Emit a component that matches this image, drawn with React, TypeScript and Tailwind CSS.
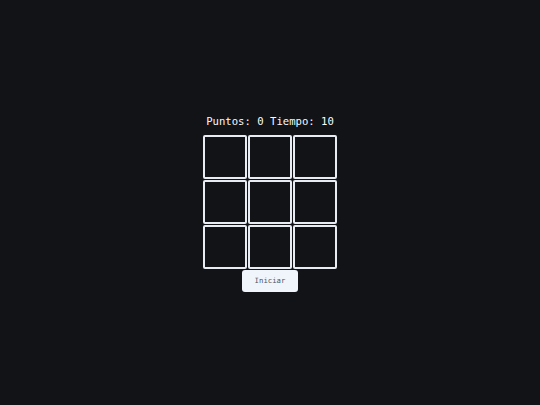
import React, { useState } from 'react';

const App: React.FC = () => {
  const [score] = useState(0);
  const [time] = useState(10);
  const cells = Array.from({ length: 9 });

  return (
    <div
      className="min-h-screen w-full bg-[#111317] flex flex-col items-center justify-center text-[#f8fafc]"
      style={{ fontFamily: '"DejaVu Sans Mono", monospace' }}
    >
      <div className="text-[10.6px] leading-[16px] font-medium mb-[6px] whitespace-pre">
        Puntos: {score} Tiempo: {time}
      </div>
      <div className="grid grid-cols-[44px_44px_44px] gap-[1px]">
        {cells.map((_, i) => (
          <div
            key={i}
            className="h-[44px] w-[44px] border-2 border-[#e8ecf2] rounded-[2px] bg-[#111317]"
          />
        ))}
      </div>
      <button
        className="mt-[1px] mb-[1px] h-[22px] w-[56px] rounded-[3px] bg-[#f0f5fc] text-[#4b5563] text-[7.3px] leading-none"
        style={{ fontFamily: '"DejaVu Sans Mono", monospace' }}
      >
        Iniciar
      </button>
    </div>
  );
};

export default App;
